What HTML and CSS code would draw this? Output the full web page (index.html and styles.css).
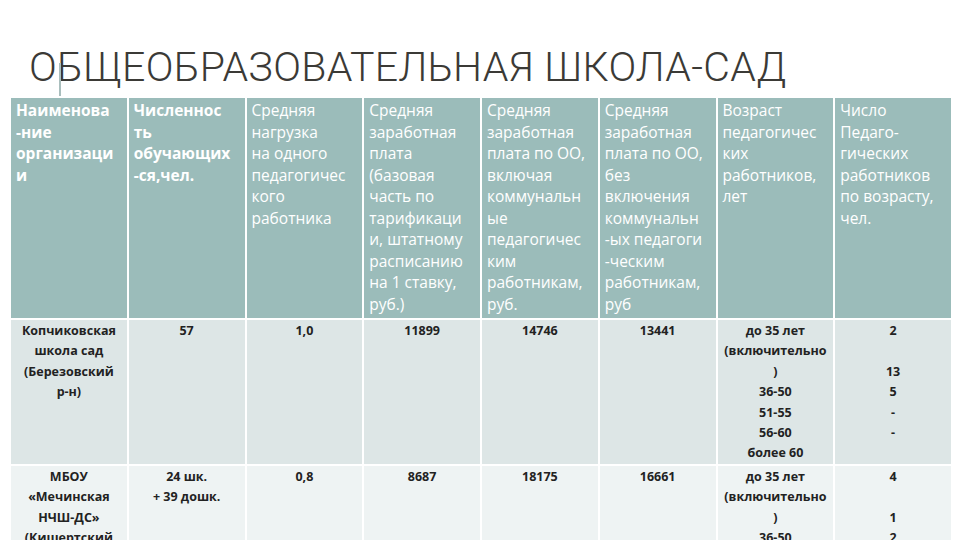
FILE: index.html
```html
<!DOCTYPE html>
<html lang="ru">
<head>
<meta charset="utf-8">
<link rel="stylesheet" href="styles.css">
</head>
<body>
<div class="slide">
  <div class="title-wrap">
    <span class="title-mark"></span>
    <h1 class="title">ОБЩЕОБРАЗОВАТЕЛЬНАЯ ШКОЛА-САД</h1>
  </div>
  <table class="grid">
    <colgroup>
      <col class="c"><col class="c"><col class="c"><col class="c"><col class="c"><col class="c"><col class="c"><col class="c">
    </colgroup>
    <tr class="head">
      <th class="b">Наименова<br>-ние<br>организаци<br>и</th>
      <th class="b">Численнос<br>ть<br>обучающих<br>-ся,чел.</th>
      <th>Средняя<br>нагрузка<br>на одного<br>педагогичес<br>кого<br>работника</th>
      <th>Средняя<br>заработная<br>плата<br>(базовая<br>часть по<br>тарификаци<br>и, штатному<br>расписанию<br>на 1 ставку,<br>руб.)</th>
      <th>Средняя<br>заработная<br>плата по ОО,<br>включая<br>коммунальн<br>ые<br>педагогичес<br>ким<br>работникам,<br>руб.</th>
      <th>Средняя<br>заработная<br>плата по ОО,<br>без<br>включения<br>коммунальн<br>-ых педагоги<br>-ческим<br>работникам,<br>руб</th>
      <th>Возраст<br>педагогичес<br>ких<br>работников,<br>лет</th>
      <th>Число<br>Педаго-<br>гических<br>работников<br>по возрасту,<br>чел.</th>
    </tr>
    <tr class="row1">
      <td>Копчиковская<br>школа сад<br>(Березовский<br>р-н)</td>
      <td>57</td>
      <td>1,0</td>
      <td>11899</td>
      <td>14746</td>
      <td>13441</td>
      <td>до 35 лет<br>(включительно<br>)<br>36-50<br>51-55<br>56-60<br>более 60</td>
      <td>2<br>&nbsp;<br>13<br>5<br>-<br>-</td>
    </tr>
    <tr class="row2">
      <td>МБОУ<br>«Мечинская<br>НЧШ-ДС»<br>(Кишертский<br>р-н)</td>
      <td>24 шк.<br>+ 39 дошк.</td>
      <td>0,8</td>
      <td>8687</td>
      <td>18175</td>
      <td>16661</td>
      <td>до 35 лет<br>(включительно<br>)<br>36-50<br>51-55</td>
      <td>4<br>&nbsp;<br>1<br>2<br>-</td>
    </tr>
  </table>
</div>
</body>
</html>
```
FILE: styles.css
```css
html, body {
  margin: 0;
  padding: 0;
  background: #ffffff;
}
.slide {
  width: 960px;
  height: 540px;
  overflow: hidden;
  position: relative;
  background: #ffffff;
}
.title-wrap {
  position: relative;
  height: 96px;
}
.title-mark {
  position: absolute;
  left: 59px;
  top: 63px;
  width: 2px;
  height: 33px;
  background: #a9bebd;
}
.title {
  margin: 0;
  padding: 40px 0 0 29px;
  font-family: Roboto, "Open Sans", "DejaVu Sans", sans-serif;
  font-weight: 300;
  font-size: 41px;
  line-height: 54px;
  letter-spacing: 0.3px;
  color: #3b3a36;
  white-space: nowrap;
}
.grid {
  margin-left: 9px;
  width: 942px;
  border-collapse: collapse;
  table-layout: fixed;
}
.grid col.c {
  width: 117.75px;
}
.grid th, .grid td {
  border: 2px solid #ffffff;
  vertical-align: top;
  white-space: nowrap;
  overflow: hidden;
}
.grid th {
  background: #9bbcba;
  color: #ffffff;
  text-align: left;
  font-family: "Open Sans", "DejaVu Sans", sans-serif;
  font-weight: 400;
  font-size: 15.5px;
  line-height: 21.5px;
  padding: 2px 2px 0 5px;
}
.grid th.b {
  font-weight: 700;
}
.head {
  height: 222px;
}
.grid td {
  text-align: center;
  color: #222222;
  font-family: "Open Sans", "DejaVu Sans", sans-serif;
  font-weight: 700;
  font-size: 12.5px;
  line-height: 20.4px;
  padding: 1px 2px 0 2px;
}
.row1 td {
  background: #dde6e6;
  height: 142px;
}
.row2 td {
  background: #eef3f3;
  height: 120px;
}
```
